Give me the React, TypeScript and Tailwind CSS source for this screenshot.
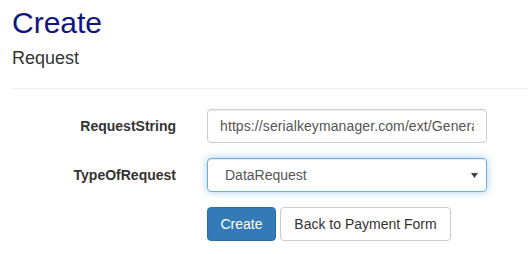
export default function App() {
  return (
    <div className="min-h-screen bg-white pl-[12px] font-['Liberation_Sans',Arial,sans-serif] text-[14px] text-[#333]">
      <h2 className="pt-[6px] text-[30px] leading-[33px] text-[#10157f]">Create</h2>
      <h4 className="mt-[9px] text-[18px] leading-[20px] text-[#333]">Request</h4>
      <hr className="mt-[20px] border-t border-[#eee]" />

      <form className="mt-[20px] flex flex-col gap-[15px]">
        <div className="flex items-start gap-[31px]">
          <label className="w-[164px] pt-[7px] text-right font-bold leading-[20px]">RequestString</label>
          <input
            readOnly
            value="https://serialkeymanager.com/ext/GenerateKey"
            className="h-[34px] w-[280px] rounded-[4px] border border-[#ccc] px-[12px] text-[14px] tracking-[0.1px] text-[#555] shadow-[inset_0_1px_1px_rgba(0,0,0,0.075)] outline-none"
          />
        </div>

        <div className="flex items-start gap-[31px]">
          <label className="w-[164px] pt-[7px] text-right font-bold leading-[20px]">TypeOfRequest</label>
          <div className="flex h-[34px] w-[280px] items-center justify-between rounded-[4px] border border-[#66afe9] pl-[17px] pr-[8px] text-[#555] shadow-[inset_0_1px_1px_rgba(0,0,0,0.075),0_0_8px_rgba(102,175,233,0.6)]">
            <span>DataRequest</span>
            <svg width="7" height="5" viewBox="0 0 7 5" className="mt-[1px]">
              <path d="M0 0h7L3.5 5z" fill="#444" />
            </svg>
          </div>
        </div>

        <div className="flex gap-[4px] pl-[195px]">
          <button
            type="button"
            className="h-[34px] w-[69px] rounded-[4px] border border-[#2e6da4] bg-[#337ab7] leading-[20px] text-white"
          >
            Create
          </button>
          <button
            type="button"
            className="h-[34px] w-[171px] rounded-[4px] border border-[#ccc] bg-white leading-[20px] text-[#333]"
          >
            Back to Payment Form
          </button>
        </div>
      </form>
    </div>
  );
}
